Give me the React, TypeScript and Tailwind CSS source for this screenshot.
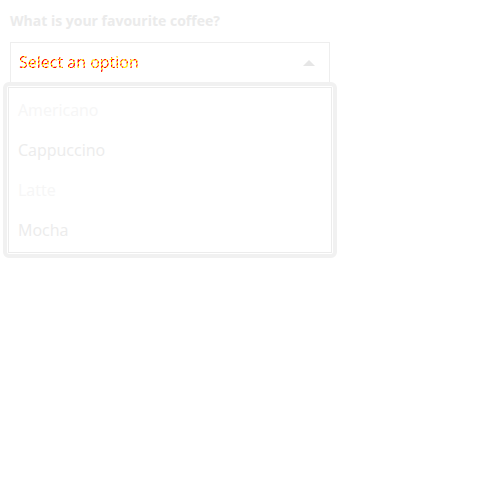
import React from "react";

export default function App() {
  const options = [
    { label: "Americano", cls: "text-[#f6f6f6]" },
    { label: "Cappuccino", cls: "text-[#ececec]" },
    { label: "Latte", cls: "text-[#f6f6f6]" },
    { label: "Mocha", cls: "text-[#ececec]" },
  ];
  return (
    <div className="w-[500px] h-[500px] bg-white relative" style={{ fontFamily: '"Open Sans", sans-serif' }}>
      <div className="pt-[11px] pl-[10px]">
        <div className="text-[14px] font-bold text-[#ebebeb] leading-[20px]">What is your favourite coffee?</div>
        <div className="mt-[11px] w-[320px] h-[41px] border border-[#eeeeee] flex items-start justify-between pl-[8px] pr-[14px] pt-[8px]">
          <span className="block text-[16px] leading-[22px] h-[22px] text-transparent bg-clip-text bg-[repeating-linear-gradient(135deg,#ff0000_0px,#ff0000_1.5px,#ffee00_1.5px,#ffee00_3px)]">
            Select an option
          </span>
          <svg width="12" height="6" viewBox="0 0 12 6" className="mt-[9px]">
            <polygon points="0,6 6,0 12,6" fill="#e6e6e6" />
          </svg>
        </div>
      </div>
      <div className="absolute left-[3px] top-[82px] w-[334px] h-[176px] rounded-[6px] border-[4px] border-[#f1f1f1] bg-white p-[1px]">
        <div className="border border-[#ececec] h-full pt-[2px]">
          {options.map((o) => (
            <div key={o.label} className={`h-[40px] flex items-center pl-[9px] text-[16px] ${o.cls}`}>
              {o.label}
            </div>
          ))}
        </div>
      </div>
    </div>
  );
}
